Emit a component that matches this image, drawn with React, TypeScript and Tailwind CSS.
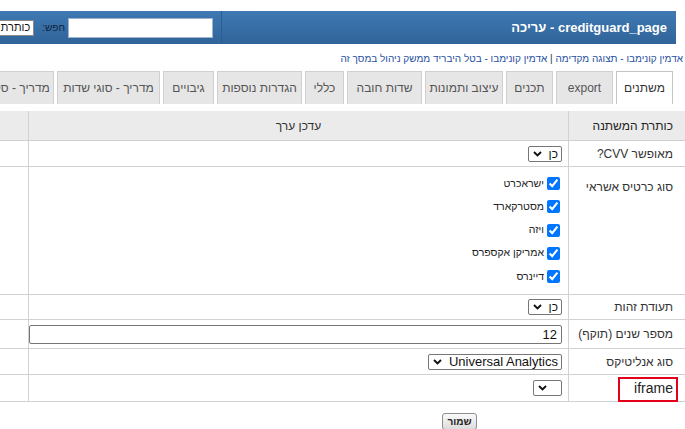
import React from "react";

const Chevron = () => (
  <svg width="9" height="6" viewBox="0 0 9 6" className="shrink-0">
    <path d="M1 1 L4.5 4.5 L8 1" fill="none" stroke="#111" strokeWidth="1.9" />
  </svg>
);

const FakeSelect = ({ w, h, text, textClass = "text-[12px]" }: { w: string; h: string; text?: string; textClass?: string }) => (
  <div className={`${w} ${h} flex items-center justify-between border border-[#767676] rounded-[2px] bg-white pr-[3px] pl-[4px]`}>
    <span className={`${textClass} text-[#111] leading-none whitespace-nowrap`}>{text ?? ""}</span>
    <Chevron />
  </div>
);

const tabs: { label: string; w: string; active?: boolean }[] = [
  { label: "משתנים", w: "w-[57px]", active: true },
  { label: "export", w: "w-[57px]" },
  { label: "תכנים", w: "w-[47px]" },
  { label: "עיצוב ותמונות", w: "w-[78px]" },
  { label: "שדות חובה", w: "w-[75px]" },
  { label: "כללי", w: "w-[39px]" },
  { label: "הגדרות נוספות", w: "w-[85px]" },
  { label: "גיבויים", w: "w-[51px]" },
  { label: "מדריך - סוגי שדות", w: "w-[103px]" },
  { label: "מדריך - סקריפטים", w: "w-[100px]" },
];

const cards = ["ישראכרט", "מסטרקארד", "ויזה", "אמריקן אקספרס", "דיינרס"];

// one table row: label cell (right), value cell (middle), empty cell (left)
const Row = ({ h, label, children, top }: { h: string; label: React.ReactNode; children?: React.ReactNode; top?: boolean }) => (
  <div className={`grid grid-cols-[117px_540px_1fr] ${h} border-b border-[#d2d2d2]`}>
    <div className={`relative flex ${top ? "items-start pt-[11px]" : "items-center"} border-l border-[#d2d2d2] pr-[12px] text-[12px] text-[#333]`}>
      {label}
    </div>
    <div className={`flex ${top ? "items-start" : "items-center"} border-l border-[#d2d2d2] pr-[6px]`}>{children}</div>
    <div />
  </div>
);

export default function App() {
  return (
    <div className="w-[685px] h-[429px] overflow-hidden bg-white font-['Liberation_Sans',Arial,sans-serif]">
      <div dir="rtl" className="w-[920px] -ml-[235px]">
        {/* header bar */}
        <div className="mt-[11px] mr-[9px] h-[33px] flex bg-gradient-to-b from-[#3f79b3] to-[#30649a]">
          <div className="w-[455px] flex items-center pr-[9px] border-l border-[#2b5c8e]">
            <span className="text-[13px] font-bold text-white whitespace-nowrap">creditguard_page - עריכה</span>
          </div>
          <div className="flex-1 flex items-center pr-[8px]">
            <div className="w-[145px] h-[20px] bg-white border border-[#9fb4cc]" />
            <span className="mr-[3px] text-[10px] text-[#10203a] whitespace-nowrap">חפש:</span>
            <div className="mr-[8px] w-[38px] h-[16px] bg-white border border-[#8a8a8a] flex items-center pr-[3px]">
              <span className="text-[11px] text-[#111] leading-none whitespace-nowrap">כותרת</span>
            </div>
          </div>
        </div>

        {/* breadcrumb links */}
        <div className="mt-[8px] h-[13px] pr-[2px] text-[10px] leading-[13px] text-[#1f4f9f] whitespace-nowrap">
          <span>אדמין קונימבו - תצוגה מקדימה</span>
          <span className="text-[#333]"> | </span>
          <span>אדמין קונימבו - בטל היבריד ממשק ניהול במסך זה</span>
        </div>

        {/* tabs */}
        <div className="mt-[6px] h-[33px] flex gap-[3px] pr-[12px]">
          {tabs.map((t) => (
            <div
              key={t.label}
              className={`${t.w} shrink-0 h-full flex items-center justify-center border border-b-0 text-[12px] whitespace-nowrap overflow-hidden ${
                t.active ? "bg-white border-[#c4c4c4] text-[#333]" : "bg-[#e6e6e6] border-[#d0d0d0] text-[#555]"
              }`}
            >
              {t.label}
            </div>
          ))}
        </div>

        {/* table */}
        <div className="mt-[7px]">
          <div className="grid grid-cols-[117px_540px_1fr] h-[30px] bg-[#ebebeb] border-b border-[#cfcfcf]">
            <div className="flex items-center pr-[12px] border-l border-[#d2d2d2] text-[12px] text-[#222]">כותרת המשתנה</div>
            <div className="flex items-center justify-center border-l border-[#d2d2d2] text-[12px] text-[#333]">עדכן ערך</div>
            <div />
          </div>

          <Row h="h-[26px]" label="מאופשר CVV?">
            <FakeSelect w="w-[34px]" h="h-[16px]" text="כן" />
          </Row>

          <Row h="h-[128px]" label="סוג כרטיס אשראי" top>
            <div className="flex flex-col gap-[10.25px] pt-[10px] pr-[2px]">
              {cards.map((c) => (
                <label key={c} className="flex items-center gap-[3px] h-[13px] text-[10.5px] text-[#222] whitespace-nowrap">
                  <input type="checkbox" defaultChecked className="w-[13px] h-[13px] m-0 accent-[#0075ff]" />
                  <span>{c}</span>
                </label>
              ))}
            </div>
          </Row>

          <Row h="h-[25px]" label="תעודת זהות">
            <FakeSelect w="w-[34px]" h="h-[16px]" text="כן" />
          </Row>

          <Row h="h-[29px]" label="מספר שנים (תוקף)">
            <div className="w-full h-[19px] bg-white border border-[#767676] rounded-[2px] flex items-center pr-[4px]">
              <span className="text-[13px] text-[#111] leading-none">12</span>
            </div>
          </Row>

          <Row h="h-[26px]" label="סוג אנליטיקס">
            <FakeSelect w="w-[134px]" h="h-[16px]" text="Universal Analytics" textClass="text-[13px]" />
          </Row>

          <Row
            h="h-[27px]"
            label={
              <>
                <span className="text-[14px] text-[#222]">iframe</span>
                <div className="absolute right-[7px] top-[2px] w-[60px] h-[25px] border-2 border-[#e3001b]" />
              </>
            }
          >
            <FakeSelect w="w-[29px]" h="h-[16px]" />
          </Row>
        </div>

        {/* save */}
        <div className="mt-[11px] flex pr-[208px]">
          <button className="w-[35px] h-[17px] rounded-[3px] border border-[#8f8f8f] bg-gradient-to-b from-[#fafafa] to-[#dcdcdc] text-[10px] font-bold text-[#222] leading-none">
            שמור
          </button>
        </div>
      </div>
    </div>
  );
}
